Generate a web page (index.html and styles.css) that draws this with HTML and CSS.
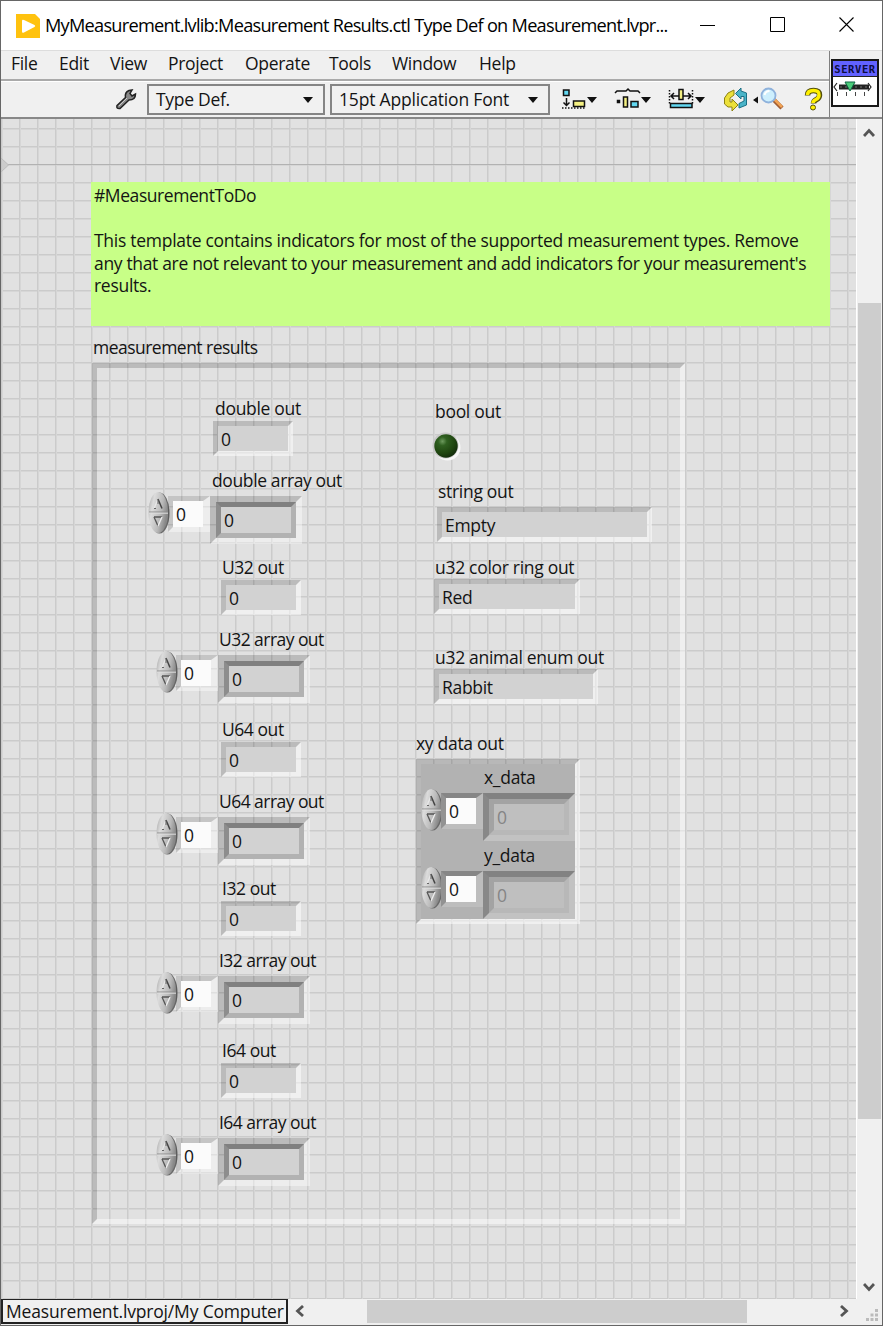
FILE: index.html
```html
<!DOCTYPE html>
<html lang="en">
<head>
<meta charset="utf-8">
<title>Measurement Results.ctl</title>
<link rel="stylesheet" href="styles.css">
</head>
<body>
<svg class="defs" width="0" height="0" aria-hidden="true">
  <defs>
    <linearGradient id="knob" x1="0" y1="0" x2="1" y2="0.4">
      <stop offset="0" stop-color="#a2a2a2"/><stop offset=".3" stop-color="#dcdcdc"/><stop offset=".7" stop-color="#bababa"/><stop offset="1" stop-color="#888"/>
    </linearGradient>
    <radialGradient id="led" cx=".35" cy=".3" r=".75">
      <stop offset="0" stop-color="#6d9a5e"/><stop offset=".25" stop-color="#2f6020"/><stop offset=".7" stop-color="#1f4510"/><stop offset="1" stop-color="#122b0b"/>
    </radialGradient>
    <symbol id="spin" viewBox="0 0 22 43">
      <ellipse cx="11.5" cy="22" rx="10" ry="20.5" fill="#686868"/>
      <ellipse cx="10.3" cy="21.5" rx="9.8" ry="20.5" fill="url(#knob)"/>
      <path d="M1 21h19" stroke="#8c8c8c"/><path d="M1 22.2h19" stroke="#ddd"/>
      <path d="M6 17.5L10 8" stroke="#e8e8e8" stroke-width="1.3"/><path d="M10 8l4 9.500" stroke="#444" stroke-width="1.5"/><path d="M10 8v5M6 17.5h2" stroke="#666"/>
      <path d="M6 26h8" stroke="#555" stroke-width="1.5"/><path d="M6 26l4 9" stroke="#555" stroke-width="1.3"/><path d="M14 26l-4 9" stroke="#eee" stroke-width="1.3"/>
    </symbol>
  </defs>
</svg>
<div class="window">
  <header class="titlebar">
    <svg class="app-icon" width="24" height="24" viewBox="0 0 24 24"><path d="M0 0h19l5 5v19H0z" fill="#ffc20e"/><path d="M6 7q0-2 2-1l10.500 5q1.500 1 0 2L8 18.500q-2 1-2-1z" fill="#fff"/></svg>
    <span class="title">MyMeasurement.lvlib:Measurement Results.ctl Type Def on Measurement.lvpr...</span>
    <div class="controls">
      <svg width="16" height="16"><path d="M0 8.500h15" stroke="#000"/></svg>
      <svg width="16" height="16"><path d="M.5.5h14v14H.5z" fill="none" stroke="#000"/></svg>
      <svg width="16" height="16"><path d="M.5.5l14 14M14.500.5l-14 14" stroke="#000" stroke-width="1.1"/></svg>
    </div>
  </header>
  <div class="top">
    <div class="bars">
      <nav class="menu"><span>File</span><span>Edit</span><span>View</span><span>Project</span><span>Operate</span><span>Tools</span><span>Window</span><span>Help</span></nav>
      <div class="toolbar">
        <svg class="wrench" width="22" height="23" viewBox="0 0 22 23"><path d="M2 17.500L10.500 9.500Q9.500 4.500 14 2.500L17 2 15 5.500l2 2.500 3.500-2Q20.500 12 14 12L5 20.500Q1 21 2 17.500z" fill="#888" stroke="#222" stroke-width="1.500"/><path d="M4 18l8-8" stroke="#ccc"/></svg>
        <div class="select type"><span>Type Def.</span><i></i></div>
        <div class="select font"><span>15pt Application Font</span><i></i></div>
        <svg class="tools" width="272" height="36" viewBox="555 81 272 36">
          <g stroke="#111" stroke-width="1.500">
            <path d="M563.500 90h5.500v5.500h-5.500z" fill="#62d7f0"/><path d="M573.500 101h11v5.500h-11z" fill="#f4f082"/>
            <path d="M566.500 98v7M563.500 102.500l3 3 3-3" fill="none"/><path d="M562 108h24" stroke-dasharray="1.500 1.500" fill="none"/>
            <path d="M615 93l2-2h9l2-2 2 2h8l2 2" fill="none"/><path d="M617.500 100.500h2v2h-2z" fill="#111"/><path d="M623.500 97h4v10h-4z" fill="#f4f082"/><path d="M631 101.500h7v5.500h-7z" fill="#62d7f0"/>
            <path d="M669.500 90v14M692.500 90v14" fill="none" stroke-dasharray="1.500 1.500"/><path d="M671 96h20M674 93l-3 3 3 3M688 93l3 3-3 3" fill="none"/><path d="M679 89.500h4v10h-4z" fill="#f4f082"/><path d="M670.500 103.500h21.500v4h-21.500z" fill="#62d7f0"/>
          </g>
          <path d="M587 97h10l-5 6zM641 97h10l-5 6zM695 97h10l-5 6zM753 100l5-3.500v7z" fill="#111"/>
          <path d="M734 90l-6 3-3.500 5v6l3.500 3h4v4l6-6-6-6v3h-2v-4l4-3z" fill="#ece03a" stroke="#8d8212"/>
          <path d="M741 88l-5.500 5.500L741 99v-2.500h3v4.500l-5 2.500v4.500l7.500-3V93l-5.500-2z" fill="#4ab4c8" stroke="#1b6f84"/>
          <path d="M773 99l9 9" stroke="#a05c32" stroke-width="4.500"/><path d="M773 98l9 9" stroke="#f1a354" stroke-width="2.500"/><circle cx="768.500" cy="95.500" r="7" fill="#cdeffd" stroke="#8fb2dc" stroke-width="1.800"/><path d="M764.500 95q1-4 5-4" stroke="#fff" stroke-width="2" fill="none"/>
          <path d="M807.500 95.500q0-5 6-5t6 4.500q0 3-3 4.500t-3 4" fill="none" stroke="#54500c" stroke-width="5.500"/><path d="M807.500 95q0-4.500 6-4.500t5.500 4.500q0 3-3 4.500t-3 3.500" fill="none" stroke="#fff000" stroke-width="3.500"/><circle cx="813" cy="107.500" r="2.500" fill="#fff000" stroke="#54500c"/>
        </svg>
      </div>
    </div>
    <div class="vi-icon"><b>SERVER</b>
      <svg width="44" height="29" viewBox="0 0 44 29"><path d="M6 10h30" stroke="#222" stroke-width="5"/><path d="M7 10h28" stroke="#888" stroke-width=".8" stroke-dasharray="2 3"/><path d="M4 6l-3 4 3 4M35 6l3 4-3 4" fill="none" stroke="#222" stroke-width="1.200"/><path d="M12 5h10l-5 9z" fill="#4ccc7a" stroke="#164"/><path d="M4.500 15v4M13.500 15v4M22.500 15v4M31.500 15v4" stroke="#444"/></svg>
    </div>
  </div>
  <div class="middle">
    <main class="panel">
      <div class="canvas">
        <div class="origin-line"></div>
        <svg class="origin-mark" width="9" height="16"><path d="M0 1l7.500 7L0 15z" fill="#ccc" stroke="#bbb"/></svg>
        <div class="note"><p class="n0">#MeasurementToDo</p><p>This template contains indicators for most of the supported measurement types. Remove</p><p class="n2">any that are not relevant to your measurement and add indicators for your measurement's</p><p>results.</p></div>
        <span class="label results" style="left:93px;top:335px">measurement results</span>
        <div class="frame"></div>

        <section class="pair" style="left:148px;top:396px">
          <span class="label scalar-label">double out</span><div class="field scalar">0</div><span class="label array-label">double array out</span>
          <div class="array"><svg class="spin"><use href="#spin"/></svg><div class="index">0</div><div class="cell"><div>0</div></div></div>
        </section>
        <section class="pair int" style="left:156px;top:555px">
          <span class="label scalar-label">U32 out</span><div class="field scalar">0</div><span class="label array-label">U32 array out</span>
          <div class="array"><svg class="spin"><use href="#spin"/></svg><div class="index">0</div><div class="cell"><div>0</div></div></div>
        </section>
        <section class="pair int" style="left:156px;top:717px">
          <span class="label scalar-label">U64 out</span><div class="field scalar">0</div><span class="label array-label">U64 array out</span>
          <div class="array"><svg class="spin"><use href="#spin"/></svg><div class="index">0</div><div class="cell"><div>0</div></div></div>
        </section>
        <section class="pair int" style="left:156px;top:876px">
          <span class="label scalar-label">I32 out</span><div class="field scalar">0</div><span class="label array-label">I32 array out</span>
          <div class="array"><svg class="spin"><use href="#spin"/></svg><div class="index">0</div><div class="cell"><div>0</div></div></div>
        </section>
        <section class="pair int" style="left:156px;top:1038px">
          <span class="label scalar-label">I64 out</span><div class="field scalar">0</div><span class="label array-label">I64 array out</span>
          <div class="array"><svg class="spin"><use href="#spin"/></svg><div class="index">0</div><div class="cell"><div>0</div></div></div>
        </section>

        <span class="label" style="left:435px;top:399px">bool out</span>
        <svg class="led" width="32" height="32"><circle cx="16.500" cy="16.500" r="13" fill="#f8f8f8"/><circle cx="14.500" cy="14.500" r="13" fill="#c8c8c8"/><circle cx="15" cy="15" r="11.700" fill="url(#led)"/></svg>
        <span class="label" style="left:438px;top:479px">string out</span>
        <div class="field text" style="left:437px;top:507px;width:215px">Empty</div>
        <span class="label" style="left:435px;top:555px">u32 color ring out</span>
        <div class="field text" style="left:434px;top:579px;width:146px">Red</div>
        <span class="label" style="left:435px;top:645px">u32 animal enum out</span>
        <div class="field text" style="left:434px;top:669px;width:164px">Rabbit</div>
        <span class="label" style="left:416px;top:731px">xy data out</span>
        <div class="cluster">
          <span class="label">x_data</span>
          <div class="array"><svg class="spin"><use href="#spin"/></svg><div class="index">0</div><div class="cell"><div>0</div></div></div>
          <span class="label">y_data</span>
          <div class="array"><svg class="spin"><use href="#spin"/></svg><div class="index">0</div><div class="cell"><div>0</div></div></div>
        </div>
      </div>
    </main>
    <div class="vscroll">
      <svg width="12" height="9"><path d="M1 8l5-5.500L11 8" fill="none" stroke="#555" stroke-width="2.800"/></svg>
      <div class="thumb"></div>
      <svg width="12" height="9"><path d="M1 1l5 5.500L11 1" fill="none" stroke="#555" stroke-width="2.800"/></svg>
    </div>
  </div>
  <footer class="bottom">
    <div class="path">Measurement.lvproj/My Computer</div>
    <svg class="left" width="9" height="12"><path d="M8 1L2.500 6 8 11" fill="none" stroke="#555" stroke-width="2.800"/></svg>
    <div class="hthumb"></div>
    <svg class="right" width="9" height="12"><path d="M1 1l5.500 5L1 11" fill="none" stroke="#555" stroke-width="2.800"/></svg>
    <svg class="grip" width="13" height="13"><path d="M9 0h3v3H9zM4.500 4.500h3v3h-3zM9 4.500h3v3H9zM0 9h3v3H0zM4.500 9h3v3h-3zM9 9h3v3H9z" fill="#bbb"/></svg>
  </footer>
</div>
</body>
</html>
```
FILE: styles.css
```css
* { box-sizing: border-box; }
body { margin: 0; font: 17.5px/24px "Open Sans", "Noto Sans", sans-serif; letter-spacing: -.3px; color: #141414; overflow: hidden; }
.defs { position: absolute; }
svg { display: block; flex: none; }
.window { width: 883px; height: 1326px; border: 1px solid #666; display: flex; flex-direction: column; background: #f0f0f0; white-space: nowrap; }
.titlebar { height: 49px; background: #fff; display: flex; align-items: center; padding: 0 25px 0 15px; flex: none; }
.title { margin: -1px 0 0 5px; font-size: 18.2px; color: #000; width: 655px; letter-spacing: -.74px; }
.controls { display: flex; gap: 53.5px; }
.controls svg { margin-top: -2px; }
.top { display: flex; height: 69px; flex: none; border-top: 1px solid #ddd; border-bottom: 2px solid #888; }
.bars { width: 829px; border-right: 1px solid #808080; }
.menu { height: 30px; border-bottom: 2px solid #aaa; display: grid; grid-template-columns: 48px 51px 58px 77px 84px 63px 87px 60px; padding-left: 10px; }
.toolbar { display: flex; border-top: 1px solid #fff; height: 36px; padding: 2px 0 2px 114px; }
.wrench { margin: 4px 0 0; }
.select { height: 31px; border: 2px solid #858585; display: flex; align-items: center; justify-content: space-between; padding: 0 10px 2px 7px; background: #f1f1f1; }
.type { width: 178px; margin-left: 10px; }
.font { width: 220px; margin-left: 5px; padding-right: 10px; }
.font span { letter-spacing: -.18px; }
.select i { border: 5px solid transparent; border-top: 6px solid #111; border-bottom: 0; margin-top: 2px; }
.tools { margin: -3px 0 0 5px; }
.vi-icon { width: 48px; height: 48px; margin: 8px 0 0 1px; border: 2px solid #181818; background: #fff; }
.vi-icon b { display: block; height: 16px; background: #6262ff; border-bottom: 1px solid #222; font: bold 10.5px/16px "DejaVu Sans Mono", monospace; letter-spacing: .6px; text-align: center; color: #0c0c40; }
.middle { display: flex; height: 1180px; flex: none; }
.panel { width: 856px; flex: none; position: relative; overflow: hidden; background: linear-gradient(90deg, #cbcbcb 0 1px, #d6d6d6 1px 2px, transparent 2px) 18px 0 / 18px 18px, linear-gradient(#cbcbcb 0 1px, #d6d6d6 1px 2px, transparent 2px) 0 9px / 18px 18px, #e1e1e1; border-right: 1px solid #fff; }
.canvas { position: absolute; left: -1px; top: -119px; width: 857px; height: 1300px; }
.canvas > * { position: absolute; }
.origin-line { left: 8px; top: 164px; width: 850px; height: 1px; background: #b2b2b2; }
.origin-mark { left: 1px; top: 157px; }
.note { left: 91px; top: 182px; width: 739px; height: 144px; background: #c8ff87; padding: 2px 3px; line-height: 22.5px; letter-spacing: -.28px; }
.note p { margin: 0; width: max-content; }
.note .n0 { padding-bottom: 22.5px; letter-spacing: -.43px; }
.note .n2 { letter-spacing: -.335px; }
.label { white-space: nowrap; }
.results { letter-spacing: -.52px; }
.frame { left: 92px; top: 363px; width: 593px; height: 861px; border: 5px solid; border-color: rgba(0,0,0,.17) rgba(255,255,255,.48) rgba(255,255,255,.48) rgba(0,0,0,.17); }
.pair { width: 200px; }
.scalar-label { display: block; margin-left: 67px; }
.int .scalar-label { margin-left: 66px; letter-spacing: -.45px; }
.field { height: 35px; border: 5px solid; border-color: rgba(0,0,0,.17) rgba(255,255,255,.5) rgba(255,255,255,.5) rgba(0,0,0,.17); background: #d2d2d2; background-clip: padding-box; line-height: 26px; padding-left: 3px; }
.scalar { margin: 1px 0 0 65px; width: 80px; }
.array-label { display: block; margin: 12px 0 7px 64px; height: 24px; letter-spacing: -.38px; }
.int .array-label { margin-left: 63px; letter-spacing: -.55px; }
.array { display: flex; height: 48px; }
.pair .array { margin-top: -8px; }
.spin { width: 22px; height: 43px; margin-right: -2px; }
.index { width: 42px; height: 36px; margin-top: 5px; border: 5px solid; border-color: rgba(0,0,0,.12) rgba(255,255,255,.4) rgba(255,255,255,.4) rgba(0,0,0,.12); border-right-width: 7px; background: #fbfbfb; background-clip: padding-box; line-height: 26px; padding-left: 3px; }
.cell { width: 92px; height: 48px; margin-top: 5px; border: 6px solid; border-color: rgba(0,0,0,.17) rgba(255,255,255,.42) rgba(255,255,255,.42) rgba(0,0,0,.17); }
.cell div { height: 36px; border: 5px solid; border-color: #808080 #b2b2b2 #b2b2b2 #8d8d8d; background: #d2d2d2; line-height: 26px; padding-left: 3px; }
.led { left: 431px; top: 431px; }
.cluster { left: 416px; top: 759px; width: 164px; height: 165px; border: 5px solid; border-color: rgba(0,0,0,.18) rgba(255,255,255,.5) rgba(255,255,255,.5) rgba(0,0,0,.18); background: #b2b2b2; background-clip: padding-box; display: grid; grid-template-rows: 24px 54px 24px 54px; padding-top: 1px; }
.cluster .label { padding-left: 63px; }
.cluster .array { margin-top: -1px; }
.cluster .cell { border-color: #828282 #c2c2c2 #c2c2c2 #888; }
.cluster .cell div { border-color: #a3a3a3 #b8b8b8 #b8b8b8 #a3a3a3; background: #bfbfbf; color: #858585; }
.cluster .index { border-color: #868686 #bdbdbd #bdbdbd #929292; }
.vscroll { width: 25px; display: flex; flex-direction: column; align-items: center; padding: 9px 0 7px; }
.vscroll svg { margin-right: 1px; }
.thumb { width: 23px; height: 816px; background: #cdcdcd; margin: 166px 0 auto 0; }
.bottom { height: 26px; display: flex; align-items: center; margin-top: -1px; }
.path { width: 287px; height: 26px; border: 2px solid #222; line-height: 22px; padding-left: 3px; letter-spacing: -.17px; background: #f0f0f0; }
.left { margin-left: 7px; }
.hthumb { width: 380px; height: 23px; margin-left: 63px; background: #cdcdcd; }
.right { margin-left: 93px; }
.grip { margin: 8px 0 0 17px; }
```
